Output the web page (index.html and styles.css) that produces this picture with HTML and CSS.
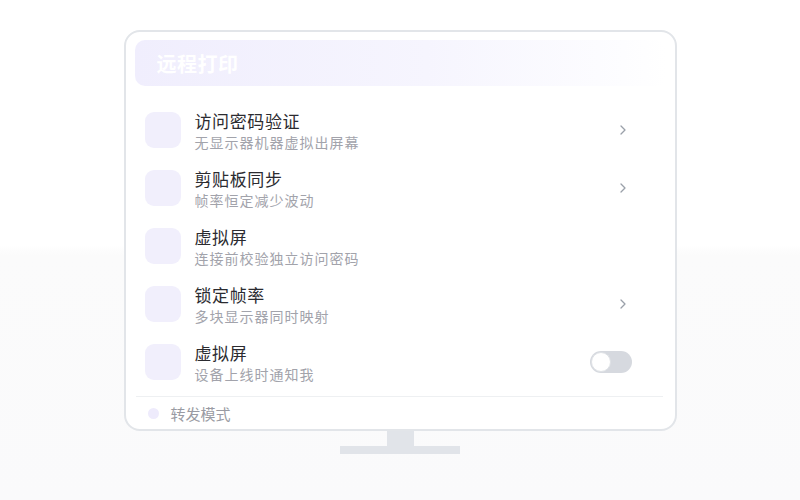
FILE: index.html
```html
<!DOCTYPE html>
<html lang="zh-CN">
<head>
  <meta charset="UTF-8" />
  <meta name="viewport" content="width=device-width, initial-scale=1" />
  <title>远程打印</title>
  <link rel="stylesheet" href="styles.css">
</head>
<body>
  <div class="stage">
    <div class="monitor">
      <div class="header">
        <h1>远程打印</h1>
      </div>

      <ul class="list">
        <li class="row">
          <span class="icon"></span>
          <div class="text">
            <div class="title">访问密码验证</div>
            <div class="sub">无显示器机器虚拟出屏幕</div>
          </div>
          <span class="chevron">
            <svg width="8" height="10" viewBox="0 0 8 10"><path d="M2 1l4 4-4 4" fill="none" stroke="#9aa0a9" stroke-width="1.3" stroke-linecap="round" stroke-linejoin="round"/></svg>
          </span>
        </li>
        <li class="row">
          <span class="icon"></span>
          <div class="text">
            <div class="title">剪贴板同步</div>
            <div class="sub">帧率恒定减少波动</div>
          </div>
          <span class="chevron">
            <svg width="8" height="10" viewBox="0 0 8 10"><path d="M2 1l4 4-4 4" fill="none" stroke="#9aa0a9" stroke-width="1.3" stroke-linecap="round" stroke-linejoin="round"/></svg>
          </span>
        </li>
        <li class="row">
          <span class="icon"></span>
          <div class="text">
            <div class="title">虚拟屏</div>
            <div class="sub">连接前校验独立访问密码</div>
          </div>
        </li>
        <li class="row">
          <span class="icon"></span>
          <div class="text">
            <div class="title">锁定帧率</div>
            <div class="sub">多块显示器同时映射</div>
          </div>
          <span class="chevron">
            <svg width="8" height="10" viewBox="0 0 8 10"><path d="M2 1l4 4-4 4" fill="none" stroke="#9aa0a9" stroke-width="1.3" stroke-linecap="round" stroke-linejoin="round"/></svg>
          </span>
        </li>
        <li class="row">
          <span class="icon"></span>
          <div class="text">
            <div class="title">虚拟屏</div>
            <div class="sub">设备上线时通知我</div>
          </div>
          <span class="toggle"><span class="knob"></span></span>
        </li>
      </ul>

      <div class="footer">
        <span class="dot"></span>
        <span>转发模式</span>
      </div>
    </div>

    <div class="neck"></div>
    <div class="base"></div>
  </div>
</body>
</html>
```

FILE: styles.css
```css
/* Reset and base styling */
* {
  box-sizing: border-box;
  margin: 0;
  padding: 0;
}

body {
  font-family: "Noto Sans CJK SC", "Noto Sans", sans-serif;
  width: 800px;
  height: 500px;
  overflow: hidden;
  background: linear-gradient(180deg, #ffffff 0%, #ffffff 49%, #fbfbfb 51%, #fafafb 100%);
  color: #2e2e33;
}

.stage {
  display: flex;
  flex-direction: column;
  align-items: center;
  padding-top: 30px;
}

/* Screen */
.monitor {
  width: 553px;
  height: 401px;
  border: 2px solid #e2e5e9;
  border-radius: 16px;
  background: #fff;
  padding: 8px 9px 0;
  display: flex;
  flex-direction: column;
}

.header {
  height: 46px;
  border-radius: 10px;
  padding: 0 22px;
  display: flex;
  align-items: center;
  background: linear-gradient(90deg, #f0eefd 0%, #f6f5fe 55%, #fdfdff 92%, #ffffff 100%);
}

.header h1 {
  font-size: 20px;
  font-weight: 700;
  color: #ffffff;
  letter-spacing: 0.5px;
}

/* Settings list */
.list {
  list-style: none;
  margin-top: 16px;
  padding-bottom: 4px;
}

.row {
  display: flex;
  align-items: flex-start;
  height: 58px;
  padding: 10px 34px 0 10px;
}

.icon {
  width: 36px;
  height: 36px;
  border-radius: 9px;
  background: #f1effc;
  flex-shrink: 0;
}

.text {
  flex: 1;
  margin: -2px 0 0 14px;
}

.title {
  font-size: 17px;
  line-height: 22px;
  color: #2b2b30;
  letter-spacing: 0.6px;
}

.sub {
  font-size: 14px;
  line-height: 20px;
  color: #a2a3ab;
  letter-spacing: 1px;
}

.chevron {
  margin: 13px 5px 0 0;
  display: flex;
}

/* Switch */
.toggle {
  position: relative;
  width: 42px;
  height: 22px;
  margin-top: 7px;
  border-radius: 11px;
  background: #d6d9df;
}

.knob {
  position: absolute;
  left: 1px;
  top: 1px;
  width: 20px;
  height: 20px;
  border-radius: 50%;
  background: #fff;
  border: 1px solid #dfe2e6;
}

/* Footer */
.footer {
  flex: 1;
  border-top: 1px solid #eef0f2;
  margin: 0 3px 0 1px;
  padding-left: 12px;
  display: flex;
  align-items: center;
  gap: 12px;
  font-size: 15px;
  color: #9a9ba3;
}

.dot {
  width: 11px;
  height: 11px;
  border-radius: 50%;
  background: #eeebfc;
}

/* Stand */
.neck {
  width: 27px;
  height: 15px;
  background: #e1e4e9;
}

.base {
  width: 120px;
  height: 8px;
  background: #e1e4e9;
}
```
